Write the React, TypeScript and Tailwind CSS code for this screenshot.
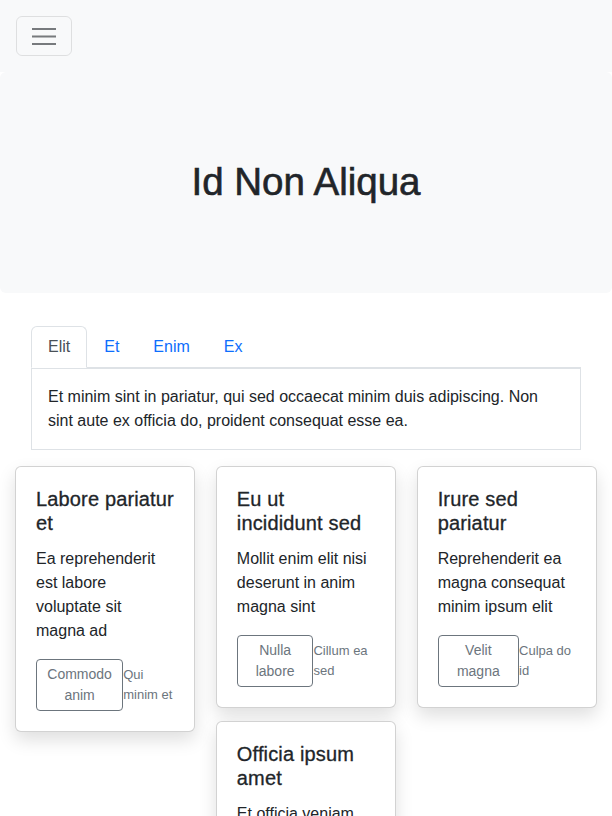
const tabs = ["Elit", "Et", "Enim", "Ex"];

const columns = [
  [
    {
      title: "Labore pariatur et",
      text: "Ea reprehenderit est labore voluptate sit magna ad",
      button: "Commodo anim",
      note: "Qui minim et",
    },
  ],
  [
    {
      title: "Eu ut incididunt sed",
      text: "Mollit enim elit nisi deserunt in anim magna sint",
      button: "Nulla labore",
      note: "Cillum ea sed",
    },
    {
      title: "Officia ipsum amet",
      text: "Et officia veniam dolor aliquip nisi ullamco",
      button: "Duis esse",
      note: "Amet in do",
    },
  ],
  [
    {
      title: "Irure sed pariatur",
      text: "Reprehenderit ea magna consequat minim ipsum elit",
      button: "Velit magna",
      note: "Culpa do id",
    },
  ],
];

type Card = (typeof columns)[number][number];

function ProjectCard({ card }: { card: Card }) {
  return (
    <div className="rounded-md border border-black/[0.175] bg-white p-5 shadow-[0_8px_18px_rgba(0,0,0,0.13)]">
      <h5 className="mb-3 text-[20px] leading-6 tracking-[0.15px] text-[#212529] [-webkit-text-stroke:0.3px_#212529]">
        {card.title}
      </h5>
      <p className="mb-4 text-base leading-6 text-[#212529]">{card.text}</p>
      <div className="flex items-center">
        <button className="rounded border border-[#6c757d] px-2 py-1 text-[14px] leading-[21px] text-[#6c757d]">
          {card.button}
        </button>
        <small className="text-[13px] leading-5 text-[#6c757d]">
          {card.note}
        </small>
      </div>
    </div>
  );
}

export default function App() {
  return (
    <div
      className="min-h-screen bg-white text-[#212529]"
      style={{ fontFamily: "'Liberation Sans', Arial, sans-serif" }}
    >
      <nav className="flex h-[72px] items-center bg-[#f8f9fa] px-4">
        <button className="flex h-10 w-[56px] items-center justify-center rounded-md border border-black/10">
          <svg width="24" height="18" viewBox="0 0 24 18">
            <path
              d="M0 2h24M0 9.5h24M0 17h24"
              stroke="rgba(33,37,41,0.6)"
              strokeWidth="2"
            />
          </svg>
        </button>
      </nav>

      <header className="flex h-[221px] items-center justify-center rounded-md bg-[#f8f9fa]">
        <h1 className="text-[38.5px] leading-tight text-[#212529] [-webkit-text-stroke:0.6px_#212529]">
          Id Non Aliqua
        </h1>
      </header>

      <section className="px-[31px] pt-[33px]">
        <ul className="flex border-b border-[#dee2e6]">
          {tabs.map((tab, i) => (
            <li key={tab} className="-mb-px">
              <a
                href="#"
                className={
                  i === 0
                    ? "block rounded-t-md border border-[#dee2e6] border-b-white bg-white px-4 py-2 leading-6 text-[#495057]"
                    : "block border border-transparent px-4 py-2 leading-6 text-[#0d6efd]"
                }
              >
                {tab}
              </a>
            </li>
          ))}
        </ul>
        <div className="border border-[#dee2e6] p-4 leading-6">
          Et minim sint in pariatur, qui sed occaecat minim duis adipiscing. Non
          sint aute ex officia do, proident consequat esse ea.
        </div>
      </section>

      <section className="grid grid-cols-3 items-start gap-x-[20.5px] px-[15px] pt-4">
        {columns.map((col, i) => (
          <div key={i} className="flex flex-col gap-[13px]">
            {col.map((card) => (
              <ProjectCard key={card.title} card={card} />
            ))}
          </div>
        ))}
      </section>
    </div>
  );
}
